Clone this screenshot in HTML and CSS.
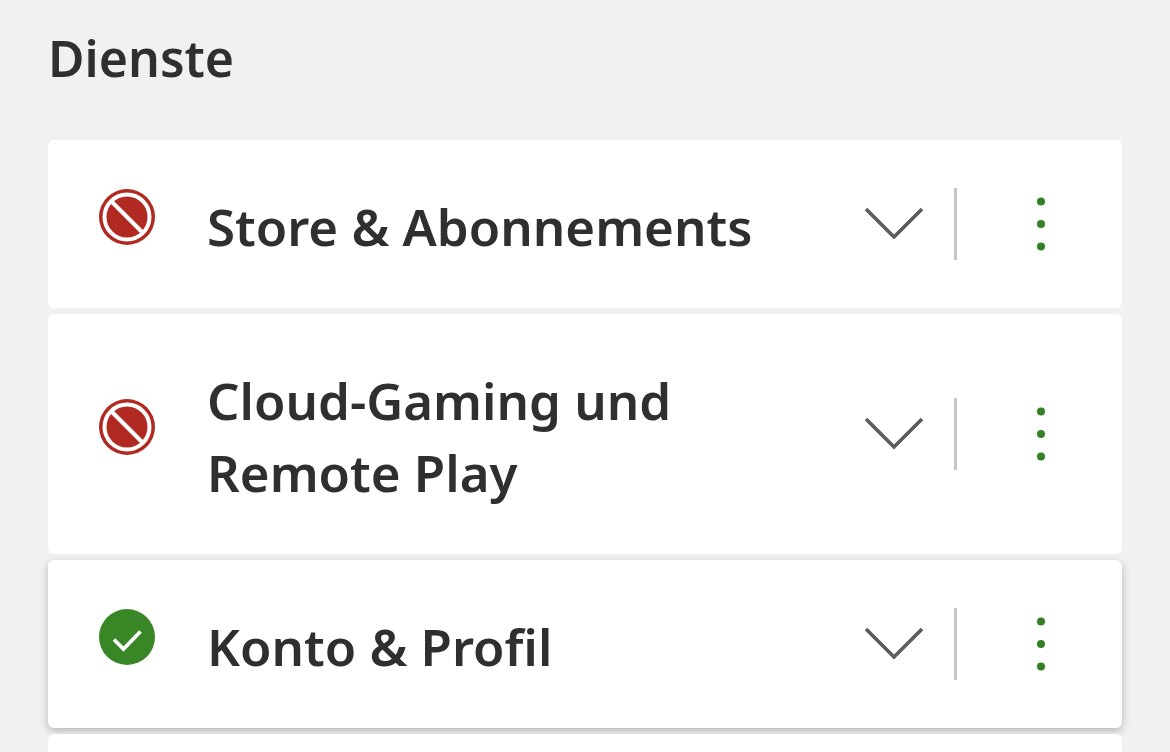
FILE: index.html
```html
<!DOCTYPE html>
<html lang="de">
<head>
<meta charset="utf-8">
<title>Dienste</title>
<link rel="stylesheet" href="styles.css">
</head>
<body>
<svg class="sprite" aria-hidden="true">
  <symbol id="blocked" viewBox="0 0 56 56"><circle cx="28" cy="28" r="28" fill="#b12a22"/><circle cx="28" cy="28" r="22.500" fill="none" stroke="#fff" stroke-width="4"/><path d="M12 12 44 44" stroke="#fff" stroke-width="4"/></symbol>
  <symbol id="ok" viewBox="0 0 56 56"><circle cx="28" cy="28" r="28" fill="#388625"/><path d="M15 30.500 24.500 40 41.500 22.500" fill="none" stroke="#fff" stroke-width="3.700"/></symbol>
  <symbol id="chevron" viewBox="0 0 60 34"><path d="M2 2 30 30 58 2" fill="none" stroke="#5c5c5c" stroke-width="3.700"/></symbol>
  <symbol id="dots" viewBox="0 0 8 54"><circle cx="4" cy="4.500" r="4"/><circle cx="4" cy="27" r="4"/><circle cx="4" cy="49.500" r="4"/></symbol>
</svg>
<main class="services">
  <h1 class="heading">Dienste</h1>
  <ul class="list">
    <li class="card">
      <svg class="status"><use href="#blocked"/></svg>
      <h2 class="name">Store &amp; Abonnements</h2>
      <button class="toggle" aria-label="Erweitern"><svg class="chevron"><use href="#chevron"/></svg></button>
      <button class="more" aria-label="Mehr"><svg class="dots"><use href="#dots"/></svg></button>
    </li>
    <li class="card">
      <svg class="status"><use href="#blocked"/></svg>
      <h2 class="name">Cloud-Gaming und Remote Play</h2>
      <button class="toggle" aria-label="Erweitern"><svg class="chevron"><use href="#chevron"/></svg></button>
      <button class="more" aria-label="Mehr"><svg class="dots"><use href="#dots"/></svg></button>
    </li>
    <li class="card card-raised">
      <svg class="status"><use href="#ok"/></svg>
      <h2 class="name">Konto &amp; Profil</h2>
      <button class="toggle" aria-label="Erweitern"><svg class="chevron"><use href="#chevron"/></svg></button>
      <button class="more" aria-label="Mehr"><svg class="dots"><use href="#dots"/></svg></button>
    </li>
    <li class="card"></li>
  </ul>
</main>
</body>
</html>
```
FILE: styles.css
```css
* { box-sizing: border-box; }
body { margin: 0; background: #f1f1f1; color: #302f2f; font-family: "Segoe UI", "Noto Sans", sans-serif; }
.sprite { display: none; }
.services { height: 100vh; overflow: hidden; padding: 22px 48px 0; }
.heading { margin: 0; font-size: 50px; line-height: 72px; font-weight: 600; }
.list { display: flex; flex-direction: column; gap: 6px; margin: 46px 0 0; padding: 0; list-style: none; }
.card { display: flex; align-items: center; min-height: 168px; padding: 46px 40px 46px 51px; background: #fff; border-radius: 6px; }
.card-raised { box-shadow: 0 3px 8px rgba(0, 0, 0, .25); }
.status { flex: none; width: 56px; height: 56px; margin-bottom: 14px; }
.name { flex: 1; margin: 0 40px 0 52px; padding-top: 4px; font-size: 51px; line-height: 72px; font-weight: 600; }
button { flex: none; display: grid; place-items: center; height: 72px; padding: 0; border: 0; background: none; }
.toggle { width: 60px; }
.chevron { width: 60px; height: 34px; }
.more { width: 128px; margin-left: 30px; padding-left: 42px; border-left: 3px solid #c5c5c5; }
.dots { width: 8px; height: 54px; fill: #348024; }
```
